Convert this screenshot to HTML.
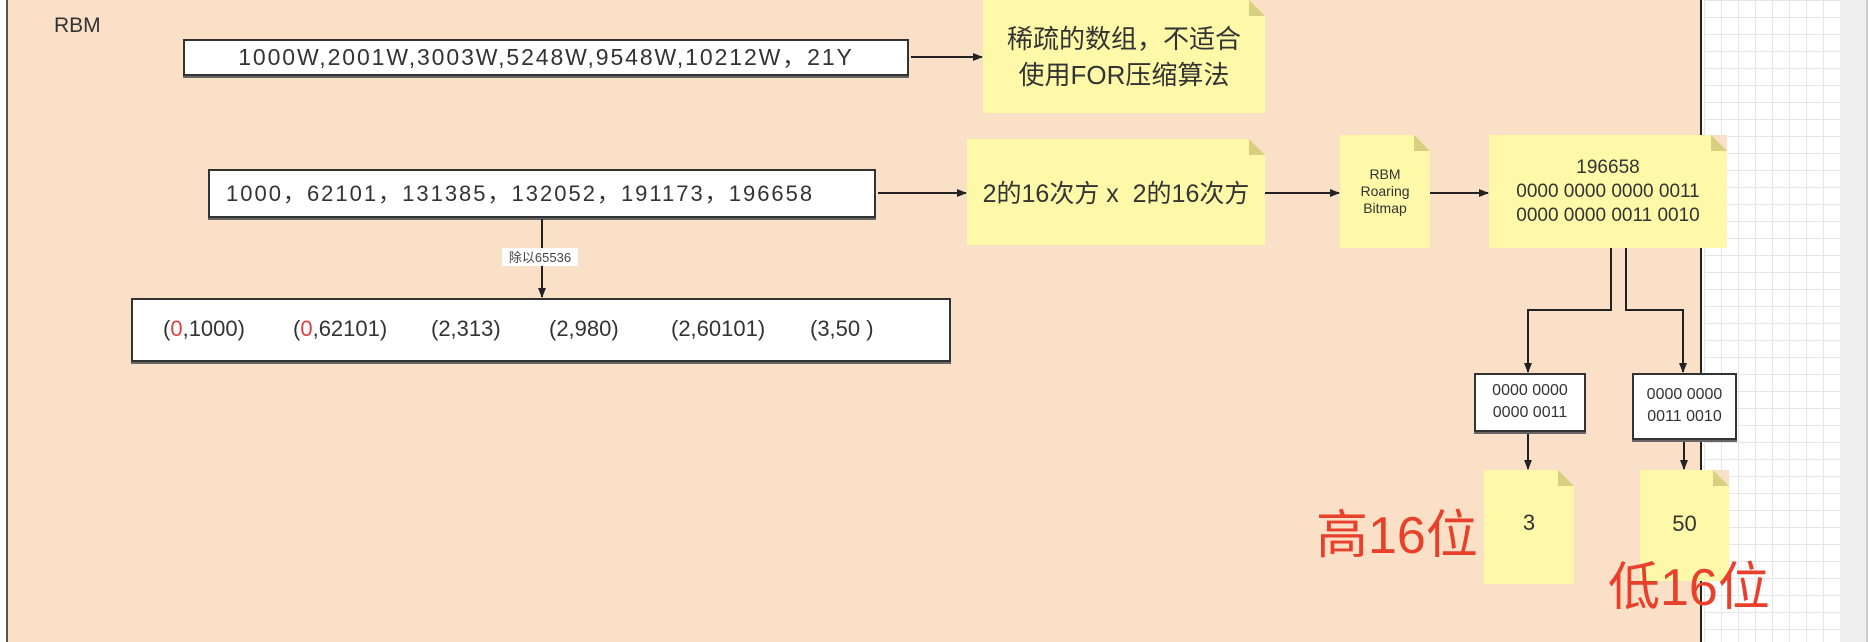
<!DOCTYPE html>
<html><head><meta charset="utf-8"><style>
*{margin:0;padding:0;box-sizing:border-box}
body{width:1868px;height:642px;overflow:hidden;position:relative;background:#fff;font-family:"Liberation Sans","Noto Sans CJK SC",sans-serif;color:#333}
.a{position:absolute}
.peach{left:6px;top:0;width:1696px;height:642px;background:#f9e0c6;border-left:2px solid #555;border-right:2px solid #222}
.grid{left:1704px;top:0;width:136px;height:642px;background-color:#fff;background-image:linear-gradient(#e6e6e6 1px,transparent 1px),linear-gradient(90deg,#e6e6e6 1px,transparent 1px);background-size:17px 17px}
.strip{left:1840px;top:0;width:28px;height:642px;background:#efefef;border-right:2px solid #ccc}
.box{position:absolute;background:#fff;border:2px solid #333;box-shadow:0 2px 0 #666}
.st{position:absolute;background:#fdf9a8;text-align:center;display:flex;align-items:center;justify-content:center;flex-direction:column;color:#333}
.st::after{content:"";position:absolute;right:0;top:0;border-style:solid;border-width:0 16px 16px 0;border-color:transparent #f9e0c6 #d6d080 transparent}
.red{color:#e8402a;font-size:52px;position:absolute;line-height:1}
.g{position:absolute;top:16px;font-size:22px;white-space:nowrap}
</style></head><body>
<div class="a peach"></div>
<div class="a grid"></div>
<div class="a strip"></div>
<div class="a" style="left:54px;top:14px;font-size:21px">RBM</div>

<div class="box" style="left:183px;top:39px;width:726px;height:37px;font-size:23px;letter-spacing:1.9px;text-align:center;line-height:33px;white-space:nowrap">1000W,2001W,3003W,5248W,9548W,10212W，21Y</div>
<div class="st" style="left:983px;top:0;width:282px;height:113px;font-size:26px;line-height:36px">稀疏的数组，不适合<br>使用FOR压缩算法</div>

<div class="box" style="left:208px;top:169px;width:668px;height:49px;font-size:22px;letter-spacing:2px;line-height:45px;padding-left:16px;white-space:nowrap">1000，62101，131385，132052，191173，196658</div>
<div class="st" style="left:967px;top:139px;width:298px;height:106px;font-size:25px;white-space:nowrap">2的16次方 x &nbsp;2的16次方</div>
<div class="st" style="left:1340px;top:135px;width:90px;height:113px;font-size:14px;line-height:17px">RBM<br>Roaring<br>Bitmap</div>
<div class="st" style="left:1489px;top:135px;width:238px;height:113px;font-size:19px;line-height:24px">196658<br>0000 0000 0000 0011<br>0000 0000 0011 0010</div>

<div class="box" style="left:131px;top:298px;width:820px;height:64px">
<span class="g" style="left:30px">(<span style="color:#e04040">0</span>,1000)</span>
<span class="g" style="left:160px">(<span style="color:#e04040">0</span>,62101)</span>
<span class="g" style="left:298px">(2,313)</span>
<span class="g" style="left:416px">(2,980)</span>
<span class="g" style="left:538px">(2,60101)</span>
<span class="g" style="left:677px">(3,50 )</span>
</div>

<div class="box" style="left:1474px;top:373px;width:112px;height:59px;font-size:16px;text-align:center;line-height:22px;padding-top:5px">0000 0000<br>0000 0011</div>
<div class="box" style="left:1632px;top:373px;width:105px;height:67px;font-size:16px;text-align:center;line-height:22px;padding-top:9px">0000 0000<br>0011 0010</div>
<div class="st" style="left:1484px;top:470px;width:90px;height:114px;font-size:22px;padding-bottom:8px">3</div>
<div class="st" style="left:1640px;top:470px;width:89px;height:111px;font-size:22px;padding-bottom:4px">50</div>
<div class="red" style="left:1316px;top:510px">高16位</div>
<div class="red" style="left:1608px;top:562px">低16位</div>

<svg class="a" style="left:0;top:0" width="1868" height="642">
<defs><marker id="m" markerWidth="10" markerHeight="10" refX="9" refY="5" orient="auto" markerUnits="userSpaceOnUse"><path d="M0,1 L10,5 L0,9 Z" fill="#222"/></marker></defs>
<g stroke="#222" stroke-width="2" fill="none">
<line x1="911" y1="57" x2="982" y2="57" marker-end="url(#m)"/>
<line x1="878" y1="193" x2="966" y2="193" marker-end="url(#m)"/>
<line x1="1265" y1="193" x2="1339" y2="193" marker-end="url(#m)"/>
<line x1="1430" y1="193" x2="1488" y2="193" marker-end="url(#m)"/>
<line x1="542" y1="219" x2="542" y2="297" marker-end="url(#m)"/>
<polyline points="1611,248 1611,310 1528,310 1528,372" marker-end="url(#m)"/>
<polyline points="1626,248 1626,310 1683,310 1683,372" marker-end="url(#m)"/>
<line x1="1528" y1="434" x2="1528" y2="469" marker-end="url(#m)"/>
<line x1="1684" y1="442" x2="1684" y2="469" marker-end="url(#m)"/>
</g>
<rect x="502" y="248" width="76" height="18" fill="#fff"/>
<text x="540" y="262" font-size="13" text-anchor="middle" fill="#444" font-family="Liberation Sans,Noto Sans CJK SC,sans-serif">除以65536</text>
</svg>
</body></html>
